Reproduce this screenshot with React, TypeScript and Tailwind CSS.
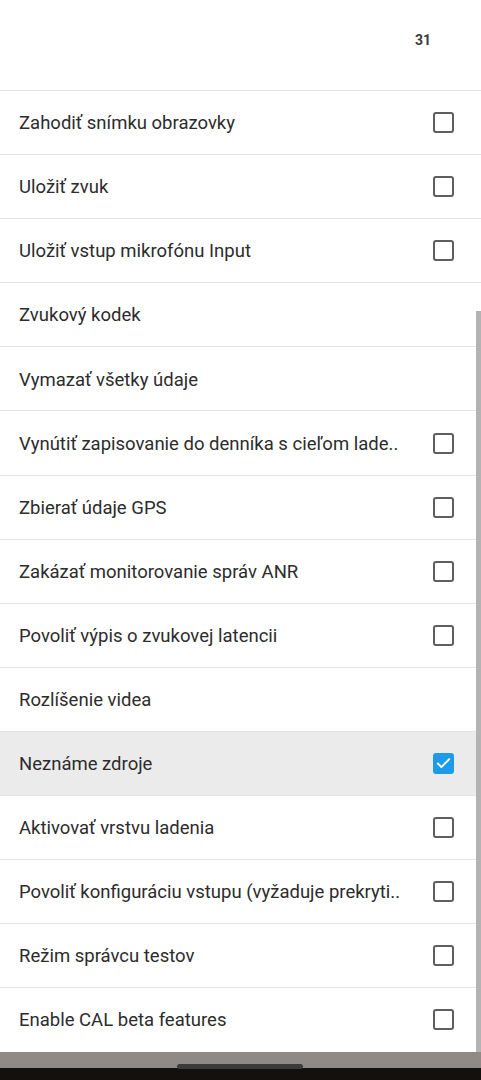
import { Check } from "lucide-react";

type Row = { label: string; checkbox?: boolean; checked?: boolean };

const rows: Row[] = [
  { label: "Zahodiť snímku obrazovky", checkbox: true },
  { label: "Uložiť zvuk", checkbox: true },
  { label: "Uložiť vstup mikrofónu Input", checkbox: true },
  { label: "Zvukový kodek" },
  { label: "Vymazať všetky údaje" },
  { label: "Vynútiť zapisovanie do denníka s cieľom lade..", checkbox: true },
  { label: "Zbierať údaje GPS", checkbox: true },
  { label: "Zakázať monitorovanie správ ANR", checkbox: true },
  { label: "Povoliť výpis o zvukovej latencii", checkbox: true },
  { label: "Rozlíšenie videa" },
  { label: "Neznáme zdroje", checkbox: true, checked: true },
  { label: "Aktivovať vrstvu ladenia", checkbox: true },
  { label: "Povoliť konfiguráciu vstupu (vyžaduje prekryti..", checkbox: true },
  { label: "Režim správcu testov", checkbox: true },
  { label: "Enable CAL beta features", checkbox: true },
];

function Checkbox({ checked }: { checked?: boolean }) {
  if (checked) {
    return (
      <div className="flex size-[21px] items-center justify-center rounded-[3px] bg-[#1d9bea]">
        <Check className="size-[17px] text-white" strokeWidth={2.6} />
      </div>
    );
  }
  return <div className="size-[21px] rounded-[3px] border-[2.5px] border-[#5e5e5e]" />;
}

function ListRow({ row }: { row: Row }) {
  return (
    <div
      className={`flex h-[64.1px] items-center border-t border-[#e3e3e3] pl-[19px] pr-[27px] ${
        row.checked ? "bg-[#ebebeb]" : "bg-white"
      }`}
    >
      <span className="flex-1 whitespace-nowrap pt-[3px] text-[18.5px] text-[#2c2c2c]">
        {row.label}
      </span>
      {row.checkbox && (
        <div className="flex shrink-0 items-center">
          <Checkbox checked={row.checked} />
        </div>
      )}
    </div>
  );
}

export default function App() {
  return (
    <div className="relative flex h-[1080px] w-[481px] flex-col overflow-hidden bg-white font-['Roboto',_'Noto_Sans',_sans-serif]">
      <div className="flex h-[90px] shrink-0 justify-end pr-[50px] pt-[30px]">
        <span className="text-[14px] font-bold text-[#3a3a3a]">31</span>
      </div>
      {rows.map((row) => (
        <ListRow key={row.label} row={row} />
      ))}
      <div className="relative mt-auto flex flex-col">
        <div className="h-[16px] bg-[#8f8a85]" />
        <div className="h-[12px] bg-[#13100d]" />
        <div className="absolute left-[177px] top-[12px] h-[5px] w-[126px] rounded-full bg-[#3d3b39]" />
      </div>
      <div className="absolute right-0 top-[311px] h-[741px] w-[5px] bg-[#b3b3b3]" />
    </div>
  );
}
